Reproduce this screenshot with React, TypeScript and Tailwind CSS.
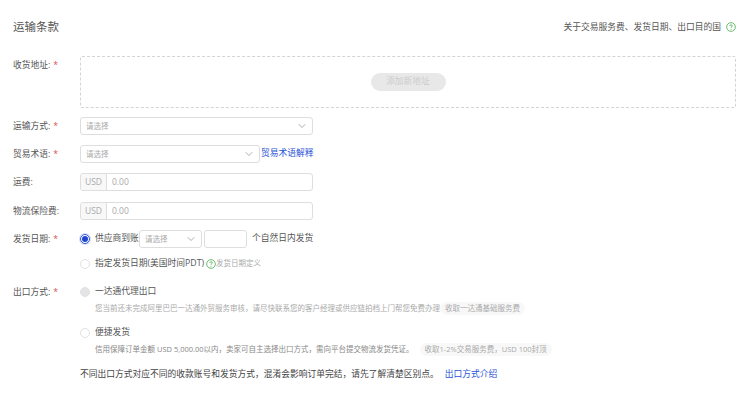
import { ChevronDown } from "lucide-react";
import type { ReactNode } from "react";

function Label({ text, required, className }: { text: string; required?: boolean; className?: string }) {
  return (
    <div className={`w-[80px] shrink-0 pl-[13px] text-[8.75px] leading-[14px] text-[#555] ${className ?? ""}`}>
      {text}
      {required && <span className="ml-[3px] text-[#d9534f]">*</span>}
    </div>
  );
}

function Select({ width, placeholder = "请选择" }: { width: string; placeholder?: string }) {
  return (
    <div
      className={`flex h-[18px] shrink-0 items-center justify-between rounded-[3px] border border-[#dedede] bg-white pl-[5px] pr-[4px] ${width}`}
    >
      <span className="pt-[1px] text-[7.5px] text-[#aaa]">{placeholder}</span>
      <ChevronDown size={12} strokeWidth={1.2} className="text-[#777]" />
    </div>
  );
}

function MoneyInput() {
  return (
    <div className="flex h-[18px] w-[233px] items-center rounded-[3px] border border-[#dedede] bg-white text-[8.5px] text-[#aaa]">
      <div className="flex h-full w-[26px] items-center justify-center rounded-l-[3px] border-r border-[#dedede] bg-[#f8f8f8]">
        USD
      </div>
      <span className="pl-[5px]">0.00</span>
    </div>
  );
}

function Help({ size = 10 }: { size?: number }) {
  return (
    <svg width={size} height={size} viewBox="0 0 12 12" fill="none" className="shrink-0">
      <circle cx="6" cy="6" r="5.2" stroke="#4caf50" strokeWidth="1" />
      <path
        d="M4.5 4.7c0-.9.7-1.4 1.5-1.4s1.5.5 1.5 1.3c0 1.2-1.5 1.2-1.5 2.4"
        stroke="#4caf50"
        strokeWidth="1"
      />
      <circle cx="6" cy="8.6" r=".6" fill="#4caf50" />
    </svg>
  );
}

function Radio({ state }: { state: "on" | "off" | "disabled" }) {
  if (state === "on") {
    return (
      <span className="flex h-[10px] w-[10px] shrink-0 items-center justify-center rounded-full border border-[#2f56d8] ring-1 ring-[#d5ddf7]">
        <span className="h-[6px] w-[6px] rounded-full bg-[#1f45d0]" />
      </span>
    );
  }
  return (
    <span
      className={`h-[10px] w-[10px] shrink-0 rounded-full border border-[#e2e2e2] ${
        state === "disabled" ? "bg-[#e4e4e4]" : "bg-white"
      }`}
    />
  );
}

function Row({ className, children }: { className?: string; children: ReactNode }) {
  return <div className={`flex items-center ${className ?? ""}`}>{children}</div>;
}

function Pill({ children, className }: { children: ReactNode; className?: string }) {
  return (
    <span className={`rounded-full bg-[#f8f8f8] px-[5px] text-[7.5px] leading-[13px] text-[#aaa] ${className ?? ""}`}>
      {children}
    </span>
  );
}

export default function App() {
  return (
    <div className="h-[406px] w-[750px] overflow-hidden bg-white pt-[19px] font-['Open_Sans','Noto_Sans_CJK_SC',sans-serif]">
      <div className="flex items-center justify-between pl-[13px] pr-[14px]">
        <h2 className="text-[11.5px] leading-[16px] text-[#555]">运输条款</h2>
        <div className="flex items-center gap-[5px] text-[8.75px] leading-[16px] text-[#555]">
          关于交易服务费、发货日期、出口目的国
          <Help />
        </div>
      </div>

      <div className="mt-[21px] flex">
        <Label text="收货地址:" required className="pt-[2px]" />
        <div className="flex h-[52px] w-[656px] items-center justify-center rounded-[2px] border border-dashed border-[#d4d4d4]">
          <button className="h-[18px] w-[75px] rounded-full bg-[#e8e8e8] text-[8.75px] text-[#ccc]">添加新地址</button>
        </div>
      </div>

      <Row className="mt-[9px]">
        <Label text="运输方式:" required />
        <Select width="w-[233px]" />
      </Row>

      <Row className="mt-[10px]">
        <Label text="贸易术语:" required />
        <Select width="w-[180px]" />
        <a className="ml-[1px] text-[8.75px] text-[#2a52d6]">贸易术语解释</a>
      </Row>

      <Row className="mt-[10px]">
        <Label text="运费:" />
        <MoneyInput />
      </Row>

      <Row className="mt-[11px]">
        <Label text="物流保险费:" />
        <MoneyInput />
      </Row>

      <Row className="mt-[10px]">
        <Label text="发货日期:" required />
        <Radio state="on" />
        <span className="ml-[5px] w-[44px] shrink-0 whitespace-nowrap text-[8.75px] text-[#555]">供应商到账</span>
        <Select width="w-[63px]" />
        <div className="ml-[2px] h-[18px] w-[43px] rounded-[3px] border border-[#dedede]" />
        <span className="ml-[5px] text-[8.75px] text-[#555]">个自然日内发货</span>
      </Row>

      <Row className="mt-[9px] h-[14px] pl-[80px]">
        <Radio state="off" />
        <span className="ml-[5px] text-[8.75px] text-[#555]">指定发货日期(美国时间PDT)</span>
        <span className="ml-[2px]">
          <Help />
        </span>
        <span className="text-[7.5px] text-[#aaa]">发货日期定义</span>
      </Row>

      <div className="mt-[14px] flex">
        <Label text="出口方式:" required />
        <div className="flex flex-col">
          <Row className="h-[14px]">
            <Radio state="disabled" />
            <span className="ml-[5px] text-[8.75px] text-[#555]">一达通代理出口</span>
          </Row>
          <Row className="mt-[3px] h-[13px] whitespace-nowrap pl-[15px] text-[7.5px] text-[#aaa]">
            您当前还未完成阿里巴巴一达通外贸服务审核，请尽快联系您的客户经理或供应链拍档上门帮您免费办理
            <Pill>收取一达通基础服务费</Pill>
          </Row>
          <Row className="mt-[11px] h-[14px]">
            <Radio state="off" />
            <span className="ml-[5px] text-[8.75px] text-[#555]">便捷发货</span>
          </Row>
          <Row className="mt-[3px] h-[13px] whitespace-nowrap pl-[15px] text-[7.5px] text-[#888]">
            信用保障订单金额 USD 5,000.00以内，卖家可自主选择出口方式，需向平台提交物流发货凭证。
            <Pill className="ml-[6px]">收取1-2%交易服务费，USD 100封顶</Pill>
          </Row>
        </div>
      </div>

      <div className="mt-[11px] whitespace-nowrap pl-[80px] text-[8.75px] leading-[14px] text-[#444]">
        不同出口方式对应不同的收款账号和发货方式，混淆会影响订单完结，请先了解清楚区别点。
        <a className="ml-[6px] text-[#2a52d6]">出口方式介绍</a>
      </div>
    </div>
  );
}
